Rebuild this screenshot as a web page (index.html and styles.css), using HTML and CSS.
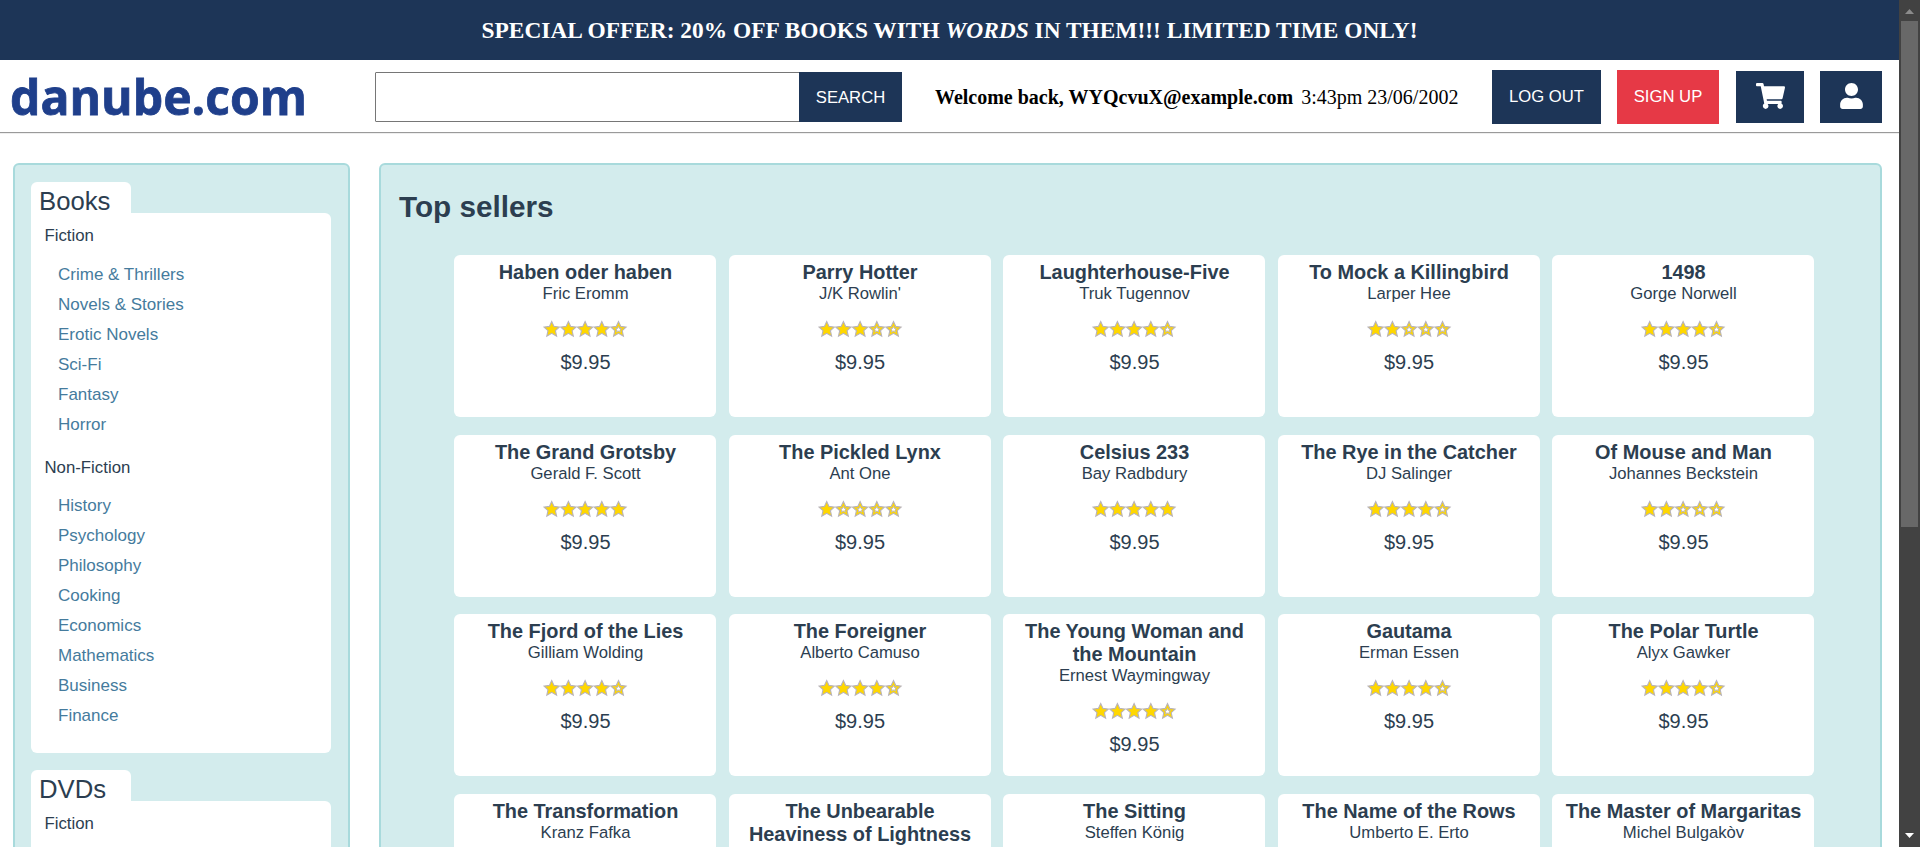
FILE: index.html
```html
<!DOCTYPE html>
<html lang="en">
<head>
<meta charset="utf-8">
<title>danube.com</title>
<link rel="stylesheet" href="styles.css">
</head>
<body>
<svg class="sprites" aria-hidden="true">
  <defs>
    <path id="star" d="M7.700 .6 10 5.400 15.300 6.100 11.400 9.700 12.600 15.200 7.700 12.300 2.800 15.200 4 9.700 .1 6.100 5.400 5.400Z" fill="#ffd700" stroke="#b8b3ba" stroke-width="1.1"/>
    <g id="star-open"><use href="#star"/><path d="M7.700 5.300 8.600 7.400 10.700 7.600 9.200 9.100 9.600 11.200 7.700 10.100 5.800 11.200 6.200 9.100 4.700 7.600 6.800 7.400Z" fill="#fff" stroke="#b8b3ba" stroke-width=".9"/></g>
    <symbol id="r5" viewBox="0 0 83 16" overflow="visible"><use href="#star"/><use href="#star" x="16.7"/><use href="#star" x="33.4"/><use href="#star" x="50.1"/><use href="#star" x="66.8"/></symbol>
    <symbol id="r4" viewBox="0 0 83 16" overflow="visible"><use href="#star"/><use href="#star" x="16.7"/><use href="#star" x="33.4"/><use href="#star" x="50.1"/><use href="#star-open" x="66.8"/></symbol>
    <symbol id="r3" viewBox="0 0 83 16" overflow="visible"><use href="#star"/><use href="#star" x="16.7"/><use href="#star" x="33.4"/><use href="#star-open" x="50.1"/><use href="#star-open" x="66.8"/></symbol>
    <symbol id="r2" viewBox="0 0 83 16" overflow="visible"><use href="#star"/><use href="#star" x="16.7"/><use href="#star-open" x="33.4"/><use href="#star-open" x="50.1"/><use href="#star-open" x="66.8"/></symbol>
    <symbol id="r1" viewBox="0 0 83 16" overflow="visible"><use href="#star"/><use href="#star-open" x="16.7"/><use href="#star-open" x="33.4"/><use href="#star-open" x="50.1"/><use href="#star-open" x="66.8"/></symbol>
  </defs>
</svg>
<div class="window">
  <div class="page">
    <div class="banner"><span>SPECIAL OFFER: 20% OFF BOOKS WITH <i>WORDS</i> IN THEM!!! LIMITED TIME ONLY!</span></div>
    <header class="topbar">
      <svg class="logo" viewBox="0 0 300 60"><text x="-2" y="45" textLength="297" lengthAdjust="spacingAndGlyphs">danube.com</text></svg>
      <form class="search">
        <input class="search-input" type="text" aria-label="Search">
        <button class="btn search-btn" type="button">SEARCH</button>
      </form>
      <div class="welcome"><b>Welcome back, WYQcvuX@example.com</b><span class="time">3:43pm 23/06/2002</span></div>
      <div class="actions">
        <button class="btn logout" type="button">LOG OUT</button>
        <button class="btn signup" type="button">SIGN UP</button>
        <button class="btn cart" type="button" aria-label="Cart"><svg width="29" height="26" viewBox="0 0 576 512"><path fill="#fff" d="M528.1 301.3l47.3-208C578.800 78.300 567.400 64 552 64H159.200l-9.200-44.800C147.800 8 137.900 0 126.500 0H24C10.700 0 0 10.700 0 24v16c0 13.300 10.700 24 24 24h69.900l70.200 343.400C147.300 417.100 136 435.200 136 456c0 30.900 25.100 56 56 56s56-25.100 56-56c0-15.700-6.400-29.800-16.800-40h209.600C430.400 426.200 424 440.300 424 456c0 30.900 25.100 56 56 56s56-25.100 56-56c0-22.200-12.900-41.300-31.600-50.400l5.500-24.300c3.400-15-8-29.300-23.400-29.300H218.100l-6.500-32h293.100c11.200 0 20.900-7.800 23.400-18.700z"/></svg></button>
        <button class="btn user" type="button" aria-label="Account"><svg width="23" height="26" viewBox="0 0 448 512"><path fill="#fff" d="M224 256c70.700 0 128-57.300 128-128S294.700 0 224 0 96 57.300 96 128s57.300 128 128 128zm89.600 32h-16.700c-22.200 10.200-46.900 16-72.900 16s-50.600-5.800-72.900-16h-16.700C60.200 288 0 348.200 0 422.400V464c0 26.500 21.500 48 48 48h352c26.500 0 48-21.500 48-48v-41.600c0-74.200-60.200-134.400-134.400-134.400z"/></svg></button>
      </div>
    </header>
    <hr class="rule">
    <div class="columns">
      <aside class="panel sidebar">
        <section class="category">
          <h2 class="tab">Books</h2>
          <div class="box">
            <h3 class="group">Fiction</h3>
            <ul class="links"><li>Crime &amp; Thrillers</li><li>Novels &amp; Stories</li><li>Erotic Novels</li><li>Sci-Fi</li><li>Fantasy</li><li>Horror</li></ul>
            <h3 class="group">Non-Fiction</h3>
            <ul class="links"><li>History</li><li>Psychology</li><li>Philosophy</li><li>Cooking</li><li>Economics</li><li>Mathematics</li><li>Business</li><li>Finance</li></ul>
          </div>
        </section>
        <section class="category">
          <h2 class="tab">DVDs</h2>
          <div class="box"><h3 class="group">Fiction</h3></div>
        </section>
      </aside>
      <main class="panel main">
        <h1 class="heading">Top sellers</h1>
        <div class="grid">
          <article class="card"><h4>Haben oder haben</h4><p>Fric Eromm</p><svg class="stars"><use href="#r4"/></svg><div class="price">$9.95</div></article>
          <article class="card"><h4>Parry Hotter</h4><p>J/K Rowlin'</p><svg class="stars"><use href="#r3"/></svg><div class="price">$9.95</div></article>
          <article class="card"><h4>Laughterhouse-Five</h4><p>Truk Tugennov</p><svg class="stars"><use href="#r4"/></svg><div class="price">$9.95</div></article>
          <article class="card"><h4>To Mock a Killingbird</h4><p>Larper Hee</p><svg class="stars"><use href="#r2"/></svg><div class="price">$9.95</div></article>
          <article class="card"><h4>1498</h4><p>Gorge Norwell</p><svg class="stars"><use href="#r4"/></svg><div class="price">$9.95</div></article>

          <article class="card"><h4>The Grand Grotsby</h4><p>Gerald F. Scott</p><svg class="stars"><use href="#r5"/></svg><div class="price">$9.95</div></article>
          <article class="card"><h4>The Pickled Lynx</h4><p>Ant One</p><svg class="stars"><use href="#r1"/></svg><div class="price">$9.95</div></article>
          <article class="card"><h4>Celsius 233</h4><p>Bay Radbdury</p><svg class="stars"><use href="#r5"/></svg><div class="price">$9.95</div></article>
          <article class="card"><h4>The Rye in the Catcher</h4><p>DJ Salinger</p><svg class="stars"><use href="#r4"/></svg><div class="price">$9.95</div></article>
          <article class="card"><h4>Of Mouse and Man</h4><p>Johannes Beckstein</p><svg class="stars"><use href="#r2"/></svg><div class="price">$9.95</div></article>

          <article class="card"><h4>The Fjord of the Lies</h4><p>Gilliam Wolding</p><svg class="stars"><use href="#r4"/></svg><div class="price">$9.95</div></article>
          <article class="card"><h4>The Foreigner</h4><p>Alberto Camuso</p><svg class="stars"><use href="#r4"/></svg><div class="price">$9.95</div></article>
          <article class="card"><h4>The Young Woman and the Mountain</h4><p>Ernest Waymingway</p><svg class="stars"><use href="#r4"/></svg><div class="price">$9.95</div></article>
          <article class="card"><h4>Gautama</h4><p>Erman Essen</p><svg class="stars"><use href="#r4"/></svg><div class="price">$9.95</div></article>
          <article class="card"><h4>The Polar Turtle</h4><p>Alyx Gawker</p><svg class="stars"><use href="#r4"/></svg><div class="price">$9.95</div></article>

          <article class="card"><h4>The Transformation</h4><p>Kranz Fafka</p></article>
          <article class="card"><h4>The Unbearable Heaviness of Lightness</h4></article>
          <article class="card"><h4>The Sitting</h4><p>Steffen König</p></article>
          <article class="card"><h4>The Name of the Rows</h4><p>Umberto E. Erto</p></article>
          <article class="card"><h4>The Master of Margaritas</h4><p>Michel Bulgakòv</p></article>
        </div>
      </main>
    </div>
  </div>
  <div class="scrollbar">
    <svg width="9" height="5" viewBox="0 0 9 5"><path d="M0 5 4.500 0 9 5Z" fill="#8b8b8b"/></svg>
    <div class="thumb"></div>
    <svg class="down" width="9" height="5" viewBox="0 0 9 5"><path d="M0 0 4.500 5 9 0Z" fill="#fff"/></svg>
  </div>
</div>
</body>
</html>
```
FILE: styles.css
```css
* { box-sizing: border-box; }
html, body { margin: 0; height: 847px; overflow: hidden; background: #fff; }
body { font: 20px "Liberation Sans", Arial, sans-serif; color: #2c3e50; }
h1, h2, h3, h4, p, ul { margin: 0; padding: 0; }
.sprites { display: none; }
.window { display: flex; height: 847px; }
.page { flex: 1; height: 847px; overflow: hidden; }

.banner {
  display: flex; align-items: center; justify-content: center;
  height: 60px; background: #1d3557; color: #fff;
  font: bold 23.4px/27px "Liberation Serif", "Times New Roman", serif;
}
.topbar { display: flex; align-items: flex-start; height: 72px; padding: 10px 17px 0 12px; }
.logo { width: 300px; height: 60px; flex: none; margin-right: 63px; overflow: visible; }
.logo text { font: bold 49px "Open Sans", sans-serif; fill: #1f3f8b; stroke: #1f3f8b; stroke-width: .8px; }
.search { display: flex; width: 527px; height: 50px; margin: 2px 0 0; flex: none; }
.search-input { width: 425px; height: 50px; border: 1px solid #767676; border-radius: 1px; background: #fff; padding: 0 10px; margin-right: -1px; }
.btn { border: 0; border-radius: 0; margin: 0; padding: 0; background: #1d3557; color: #fff; font: 16.67px "Liberation Sans", Arial, sans-serif; }
.search-btn { width: 103px; height: 50px; padding-top: 2px; position: relative; }
.welcome { margin: 16px 0 0 33px; color: #000; font: 20px/23px "Liberation Serif", "Times New Roman", serif; white-space: nowrap; }
.time { margin-left: 8px; }
.actions { display: flex; align-items: center; height: 54px; margin-left: auto; gap: 16px; }
.logout { width: 109px; height: 54px; }
.signup { width: 102px; height: 54px; background: #e63946; }
.cart { width: 68px; height: 52px; margin-left: 1px; }
.user { width: 62px; height: 52px; }
.btn svg { display: block; margin: -2px auto 0; }
.rule { height: 2px; margin: 0; border: 0; border-top: 1px solid #9a9a9a; border-bottom: 1px solid #eee; }

.columns { display: flex; align-items: flex-start; gap: 29px; padding: 29px 17px 0 13px; }
.panel { border: 2px solid #a8dadc; border-radius: 6px; background: #d3eced; height: 900px; }
.sidebar { width: 337px; padding: 17px 17px 0 16px; flex: none; }
.category { margin-bottom: 17px; }
.tab { width: 100px; height: 31px; padding: 5px 0 0 8px; border-radius: 6px 6px 0 0; background: #fff; font-size: 25.7px; line-height: 29px; font-weight: normal; }
.box { width: 300px; height: 540px; padding: 13px 13px 20px 13.5px; border-radius: 0 6px 6px 6px; background: #fff; }
.group { font-size: 16.8px; line-height: 20px; font-weight: normal; }
.links { list-style: none; margin: 14px 0 18px; padding-left: 13.5px; font-size: 17px; line-height: 30px; color: #457b9d; }
.group + .links + .group + .links { margin-top: 13px; }
.main { flex: 1; }
.heading { padding: 25px 0 0 18px; font-size: 29.7px; line-height: 34px; }
.grid { display: grid; grid-template-columns: repeat(5, 262px); grid-auto-rows: 162px; column-gap: 12.5px; row-gap: 17.7px; padding: 31px 0 0 73px; }
.card { display: flex; flex-direction: column; align-items: center; padding: 6px 9px 0 10px; border-radius: 6px; background: #fff; text-align: center; }
.card h4 { font-size: 19.9px; line-height: 23px; }
.card p { font-size: 16.67px; line-height: 19px; }
.stars { width: 83px; height: 16px; margin-top: 18px; flex: none; overflow: visible; }
.price { margin-top: 14px; font-size: 20px; line-height: 23px; }

.scrollbar { display: flex; flex-direction: column; align-items: center; width: 21px; height: 847px; padding: 9px 0; background: #424242; }
.thumb { width: 17px; height: 506px; margin-top: 7px; background: #686868; }
.down { margin-top: auto; }
```
